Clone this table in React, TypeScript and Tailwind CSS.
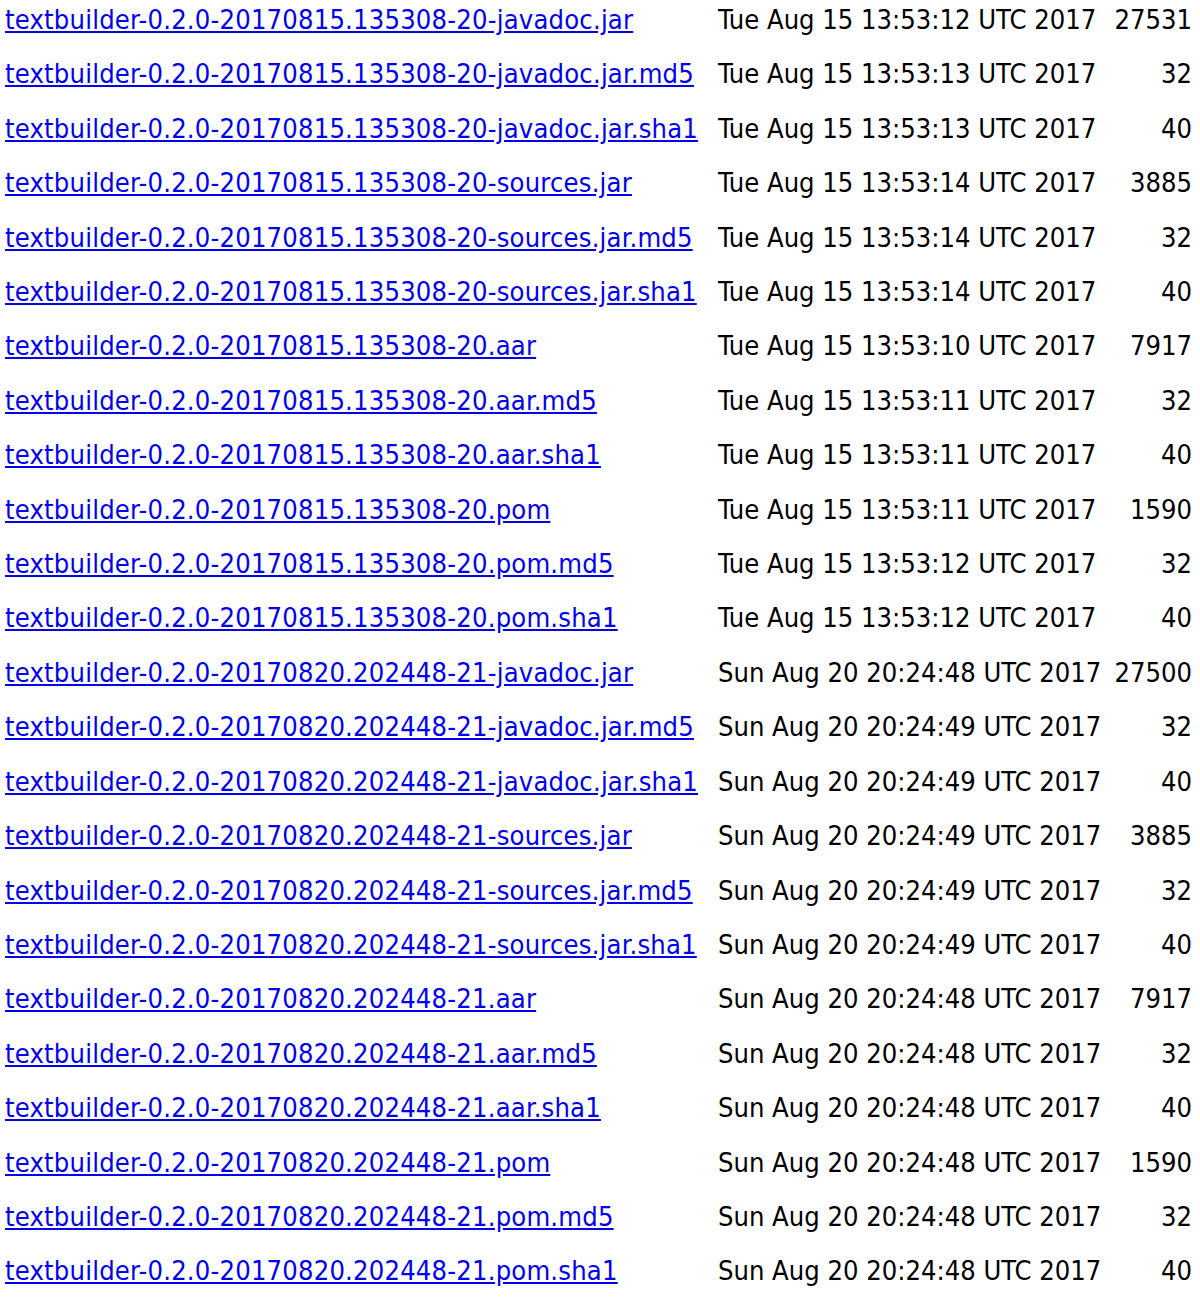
const base = "textbuilder-0.2.0-";

type Entry = { name: string; date: string; size: number };

// build the listing for one snapshot build
function snapshot(stamp: string, times: string[], day: string): Entry[] {
  const suffixes = [
    "-javadoc.jar",
    "-javadoc.jar.md5",
    "-javadoc.jar.sha1",
    "-sources.jar",
    "-sources.jar.md5",
    "-sources.jar.sha1",
    ".aar",
    ".aar.md5",
    ".aar.sha1",
    ".pom",
    ".pom.md5",
    ".pom.sha1",
  ];
  return suffixes.map((s, i) => ({
    name: base + stamp + s,
    date: `${day} ${times[i]} UTC 2017`,
    size: s.endsWith(".md5") ? 32 : s.endsWith(".sha1") ? 40 : 0,
  }));
}

const first = snapshot(
  "20170815.135308-20",
  ["13:53:12", "13:53:13", "13:53:13", "13:53:14", "13:53:14", "13:53:14", "13:53:10", "13:53:11", "13:53:11", "13:53:11", "13:53:12", "13:53:12"],
  "Tue Aug 15"
);
const second = snapshot(
  "20170820.202448-21",
  ["20:24:48", "20:24:49", "20:24:49", "20:24:49", "20:24:49", "20:24:49", "20:24:48", "20:24:48", "20:24:48", "20:24:48", "20:24:48", "20:24:48"],
  "Sun Aug 20"
);

const sizes: Record<string, number> = {
  "-javadoc.jar": 0,
  "-sources.jar": 3885,
  ".aar": 7917,
  ".pom": 1590,
};

first[0].size = 27531;
second[0].size = 27500;
for (const list of [first, second]) {
  for (const e of list) {
    if (e.size) continue;
    const key = Object.keys(sizes).find((k) => e.name.endsWith(k));
    if (key && sizes[key]) e.size = sizes[key];
  }
}

const entries = [...first, ...second];

export default function App() {
  return (
    <div
      className="bg-white text-black text-[27.1px] leading-[54.4px] -mt-[7px] pl-[5px] pr-[8px]"
      style={{ fontFamily: '"DejaVu Sans Condensed", "DejaVu Sans", sans-serif' }}
    >
      <div className="grid grid-cols-[713px_1fr_auto]">
        {entries.map((e) => (
          <div key={e.name} className="contents">
            <div className="whitespace-nowrap">
              <a href="#" className="text-[#0000ee] underline tracking-[0.2px]">
                {e.name}
              </a>
            </div>
            <div className="whitespace-nowrap">{e.date}</div>
            <div className="text-right whitespace-nowrap">{e.size}</div>
          </div>
        ))}
      </div>
    </div>
  );
}
